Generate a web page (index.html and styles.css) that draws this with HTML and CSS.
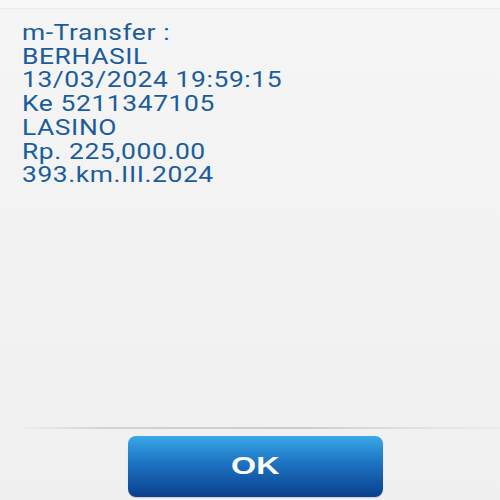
FILE: index.html
```html
<!DOCTYPE html>
<html>
<head>
<meta charset="utf-8">
<link rel="stylesheet" href="styles.css">
</head>
<body>
<div class="screen">
  <div class="topbar"></div>
  <div class="message">
    <div class="line">m-Transfer :</div>
    <div class="line">BERHASIL</div>
    <div class="line">13/03/2024 19:59:15</div>
    <div class="line">Ke 5211347105</div>
    <div class="line">LASINO</div>
    <div class="line">Rp. 225,000.00</div>
    <div class="line">393.km.III.2024</div>
  </div>
  <div class="footer">
    <div class="divider"></div>
    <div class="actions">
      <button class="ok"><span class="ok-label">OK</span></button>
    </div>
  </div>
</div>
</body>
</html>
```
FILE: styles.css
```css
html, body {
  margin: 0;
  padding: 0;
}
body {
  width: 500px;
  height: 500px;
  background: #f1f1f1;
  font-family: Roboto, "Liberation Sans", sans-serif;
  overflow: hidden;
}
.screen {
  width: 500px;
  height: 500px;
  display: flex;
  flex-direction: column;
  background: linear-gradient(#f5f5f5, #f0f0f0);
}
.topbar {
  height: 8px;
  background: #f8f8f8;
  border-bottom: 1px solid #ececec;
}
.message {
  flex: 1;
  width: 380px;
  padding: 12px 0 0 18.3px;
  color: #1b5d9c;
  font-size: 22px;
  line-height: 23.7px;
  letter-spacing: 0.5px;
  transform-origin: left top;
  transform: scaleX(1.2);
}
.footer {
  display: flex;
  flex-direction: column;
}
.divider {
  height: 2px;
  margin-left: 6px;
  background: linear-gradient(90deg, #f4f4f4, #cfd2d6 20%, #c8ccd1 60%, #dcdfe2 80%, #ececec);
}
.actions {
  display: flex;
  justify-content: center;
  padding: 7px 0 3px 0;
}
.ok {
  width: 255px;
  height: 61px;
  margin-left: 11px;
  border: none;
  border-radius: 8px;
  background: linear-gradient(#3aa7e8, #1c73c2 45%, #0a3f8c);
  color: #ffffff;
  font-family: "Liberation Sans", Arial, sans-serif;
  font-weight: bold;
  font-size: 23px;
  box-shadow: 0 1px 1px rgba(0,0,0,0.15);
}
.ok-label {
  display: inline-block;
  transform: scaleX(1.4);
}
```
